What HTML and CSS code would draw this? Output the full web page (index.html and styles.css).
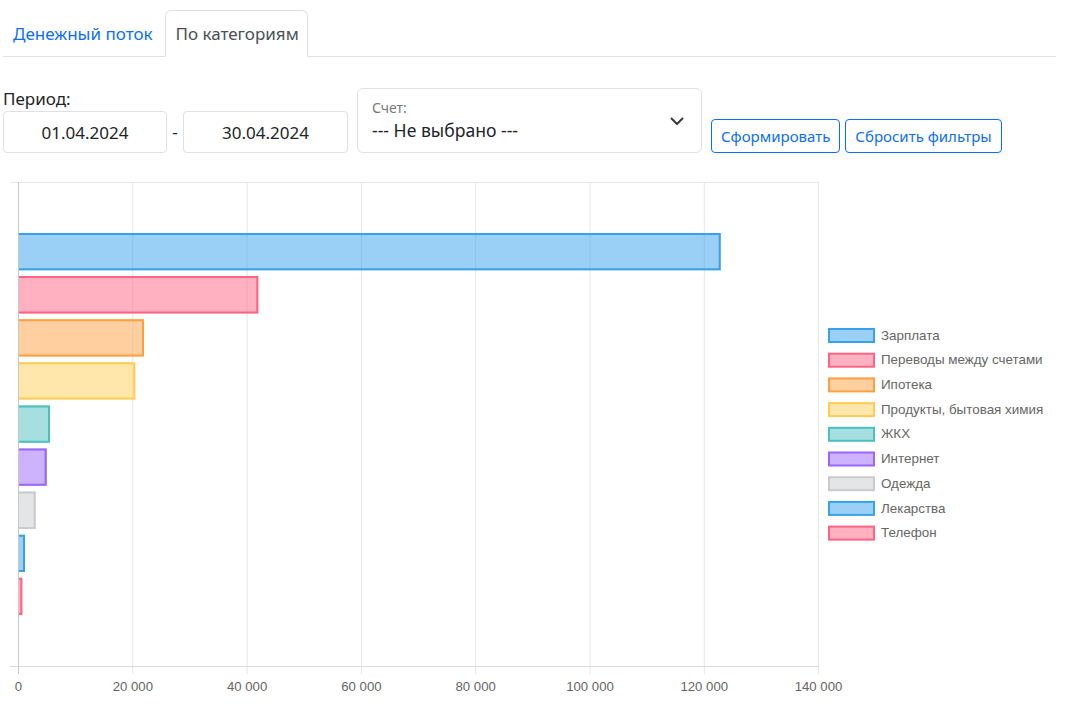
FILE: index.html
```html
<!DOCTYPE html>
<html lang="ru">
<head>
<meta charset="utf-8">
<title>Отчёт по категориям</title>
<link rel="stylesheet" href="styles.css">
</head>
<body>
<div class="page">
  <nav class="tabs">
    <a class="tab first" href="#">Денежный поток</a>
    <a class="tab active" href="#">По категориям</a>
  </nav>

  <div class="filters">
    <div class="period">
      <label class="period-label">Период:</label>
      <div class="period-inputs">
        <input class="date-input" type="text" value="01.04.2024" readonly>
        <span class="dash">-</span>
        <input class="date-input second" type="text" value="30.04.2024" readonly>
      </div>
    </div>
    <div class="select-box">
      <div class="select-text">
        <span class="select-label">Счет:</span>
        <span class="select-value">--- Не выбрано ---</span>
      </div>
      <svg class="chevron" width="14" height="10" viewBox="0 0 14 10"><path d="M1.5 2.5l5.5 5.5 5.5-5.5" fill="none" stroke="#343a40" stroke-width="2" stroke-linecap="round" stroke-linejoin="round"/></svg>
    </div>
    <div class="buttons">
      <button class="btn">Сформировать</button>
      <button class="btn">Сбросить фильтры</button>
    </div>
  </div>

  <svg class="chart" width="1056" height="530" viewBox="0 170 1056 530" xmlns="http://www.w3.org/2000/svg">
    <g class="grid" stroke="#e6e6e6" stroke-width="1" fill="none">
      <line x1="10" y1="182.5" x2="818.5" y2="182.5"/>
      <line x1="132.8" y1="182" x2="132.8" y2="674"/>
      <line x1="247.1" y1="182" x2="247.1" y2="674"/>
      <line x1="361.4" y1="182" x2="361.4" y2="674"/>
      <line x1="475.7" y1="182" x2="475.7" y2="674"/>
      <line x1="590" y1="182" x2="590" y2="674"/>
      <line x1="704.3" y1="182" x2="704.3" y2="674"/>
      <line x1="818.5" y1="182" x2="818.5" y2="674"/>
      <line x1="10" y1="666.5" x2="818.5" y2="666.5" stroke="#d9d9d9"/>
      <line x1="18.5" y1="182" x2="18.5" y2="674" stroke="#c8c8c8"/>
    </g>

    <g class="bars">
      <rect x="19" y="233" width="701.7" height="37.3" fill="rgba(54,162,235,0.5)"/>
      <path d="M19 234h700.7v35.3H19" fill="none" stroke="rgb(54,162,235)" stroke-width="2"/>

      <rect x="19" y="276.1" width="239.3" height="37.3" fill="rgba(255,99,132,0.5)"/>
      <path d="M19 277.1h238.3v35.3H19" fill="none" stroke="rgb(255,99,132)" stroke-width="2"/>

      <rect x="19" y="319.2" width="125" height="37.3" fill="rgba(255,159,64,0.5)"/>
      <path d="M19 320.2h124v35.3H19" fill="none" stroke="rgb(255,159,64)" stroke-width="2"/>

      <rect x="19" y="362.3" width="116.3" height="37.3" fill="rgba(255,205,86,0.5)"/>
      <path d="M19 363.3h115.3v35.3H19" fill="none" stroke="rgb(255,205,86)" stroke-width="2"/>

      <rect x="19" y="405.4" width="31" height="37.3" fill="rgba(75,192,192,0.5)"/>
      <path d="M19 406.4h30v35.3H19" fill="none" stroke="rgb(75,192,192)" stroke-width="2"/>

      <rect x="19" y="448.5" width="27.7" height="37.3" fill="rgba(153,102,255,0.5)"/>
      <path d="M19 449.5h26.7v35.3H19" fill="none" stroke="rgb(153,102,255)" stroke-width="2"/>

      <rect x="19" y="491.6" width="16.7" height="37.3" fill="rgba(201,203,207,0.5)"/>
      <path d="M19 492.6h15.7v35.3H19" fill="none" stroke="rgb(201,203,207)" stroke-width="2"/>

      <rect x="19" y="534.7" width="6" height="37.3" fill="rgba(54,162,235,0.5)"/>
      <path d="M19 535.7h5v35.3H19" fill="none" stroke="rgb(54,162,235)" stroke-width="2"/>

      <rect x="19" y="577.8" width="3.3" height="37.3" fill="rgba(255,99,132,0.5)"/>
      <path d="M19 578.8h2.3v35.3H19" fill="none" stroke="rgb(255,99,132)" stroke-width="2"/>
    </g>

    <g class="ticks" fill="#666" font-family="'Liberation Sans', Arial, sans-serif" font-size="13.2" text-anchor="middle">
      <text x="18.5" y="690.8">0</text>
      <text x="132.8" y="690.8">20 000</text>
      <text x="247.1" y="690.8">40 000</text>
      <text x="361.4" y="690.8">60 000</text>
      <text x="475.7" y="690.8">80 000</text>
      <text x="590" y="690.8">100 000</text>
      <text x="704.3" y="690.8">120 000</text>
      <text x="818.5" y="690.8">140 000</text>
    </g>

    <g class="legend" font-family="'Liberation Sans', Arial, sans-serif" font-size="13.4" fill="#666">
      <rect x="829" y="329" width="45" height="13" fill="rgba(54,162,235,0.5)" stroke="rgb(54,162,235)" stroke-width="2"/>
      <text x="881" y="339.6">Зарплата</text>
      <rect x="829" y="353.7" width="45" height="13" fill="rgba(255,99,132,0.5)" stroke="rgb(255,99,132)" stroke-width="2"/>
      <text x="881" y="364.3">Переводы между счетами</text>
      <rect x="829" y="378.4" width="45" height="13" fill="rgba(255,159,64,0.5)" stroke="rgb(255,159,64)" stroke-width="2"/>
      <text x="881" y="389">Ипотека</text>
      <rect x="829" y="403.1" width="45" height="13" fill="rgba(255,205,86,0.5)" stroke="rgb(255,205,86)" stroke-width="2"/>
      <text x="881" y="413.7">Продукты, бытовая химия</text>
      <rect x="829" y="427.8" width="45" height="13" fill="rgba(75,192,192,0.5)" stroke="rgb(75,192,192)" stroke-width="2"/>
      <text x="881" y="438.4">ЖКХ</text>
      <rect x="829" y="452.5" width="45" height="13" fill="rgba(153,102,255,0.5)" stroke="rgb(153,102,255)" stroke-width="2"/>
      <text x="881" y="463.1">Интернет</text>
      <rect x="829" y="477.2" width="45" height="13" fill="rgba(201,203,207,0.5)" stroke="rgb(201,203,207)" stroke-width="2"/>
      <text x="881" y="487.8">Одежда</text>
      <rect x="829" y="501.9" width="45" height="13" fill="rgba(54,162,235,0.5)" stroke="rgb(54,162,235)" stroke-width="2"/>
      <text x="881" y="512.5">Лекарства</text>
      <rect x="829" y="526.6" width="45" height="13" fill="rgba(255,99,132,0.5)" stroke="rgb(255,99,132)" stroke-width="2"/>
      <text x="881" y="537.2">Телефон</text>
    </g>
  </svg>
</div>
</body>
</html>
```

FILE: styles.css
```css
* {
  box-sizing: border-box;
}

body {
  margin: 0;
  background: #fff;
  color: #212529;
  font-family: "Noto Sans", "Open Sans", sans-serif;
  font-size: 17px;
  line-height: 26px;
}

.page {
  padding: 10px 0 0 3px;
  width: 1056px;
}

.tabs {
  display: flex;
  border-bottom: 1px solid #dee2e6;
}

.tab {
  display: block;
  height: 47px;
  padding: 9.5px 9px;
  margin-bottom: -1px;
  border: 1px solid transparent;
  border-top-left-radius: 6px;
  border-top-right-radius: 6px;
  color: #0d6efd;
  line-height: 26px;
  text-decoration: none;
}

.tab.first {
  padding-right: 11px;
}

.tab.active {
  padding-left: 10px;
  padding-right: 8px;
  color: #495057;
  background: #fff;
  border-color: #dee2e6 #dee2e6 #fff;
}

.filters {
  display: flex;
  align-items: flex-end;
  margin-top: 30px;
}

.period {
  display: flex;
  flex-direction: column;
}

.period-label {
  height: 24px;
  line-height: 24px;
}

.period-inputs {
  display: flex;
  align-items: center;
}

.date-input {
  width: 164px;
  height: 42px;
  border: 1px solid #dee2e6;
  border-radius: 4px;
  padding: 0 12px;
  font: inherit;
  color: #212529;
  text-align: center;
  outline: none;
}

.date-input.second {
  width: 165px;
}

.dash {
  width: 16px;
  text-align: center;
}

.select-box {
  display: flex;
  align-items: center;
  justify-content: space-between;
  margin-left: 9px;
  width: 345px;
  height: 65px;
  border: 1px solid #dee2e6;
  border-radius: 6px;
  padding: 0 17px 0 14px;
}

.select-text {
  display: flex;
  flex-direction: column;
  padding-top: 1px;
}

.select-label {
  font-size: 14px;
  line-height: 18px;
  color: rgba(33, 37, 41, 0.65);
}

.select-value {
  font-size: 17.6px;
  line-height: 26px;
}

.chevron {
  display: block;
}

.buttons {
  display: flex;
  gap: 5px;
  margin-left: 9px;
}

.btn {
  height: 34px;
  padding: 0 9px;
  border: 1px solid #0d6efd;
  border-radius: 4px;
  background: #fff;
  color: #0d6efd;
  font-family: inherit;
  font-size: 15px;
  line-height: 22px;
  cursor: pointer;
}

.chart {
  display: block;
  margin-left: -3px;
  margin-top: 17px;
}
```
